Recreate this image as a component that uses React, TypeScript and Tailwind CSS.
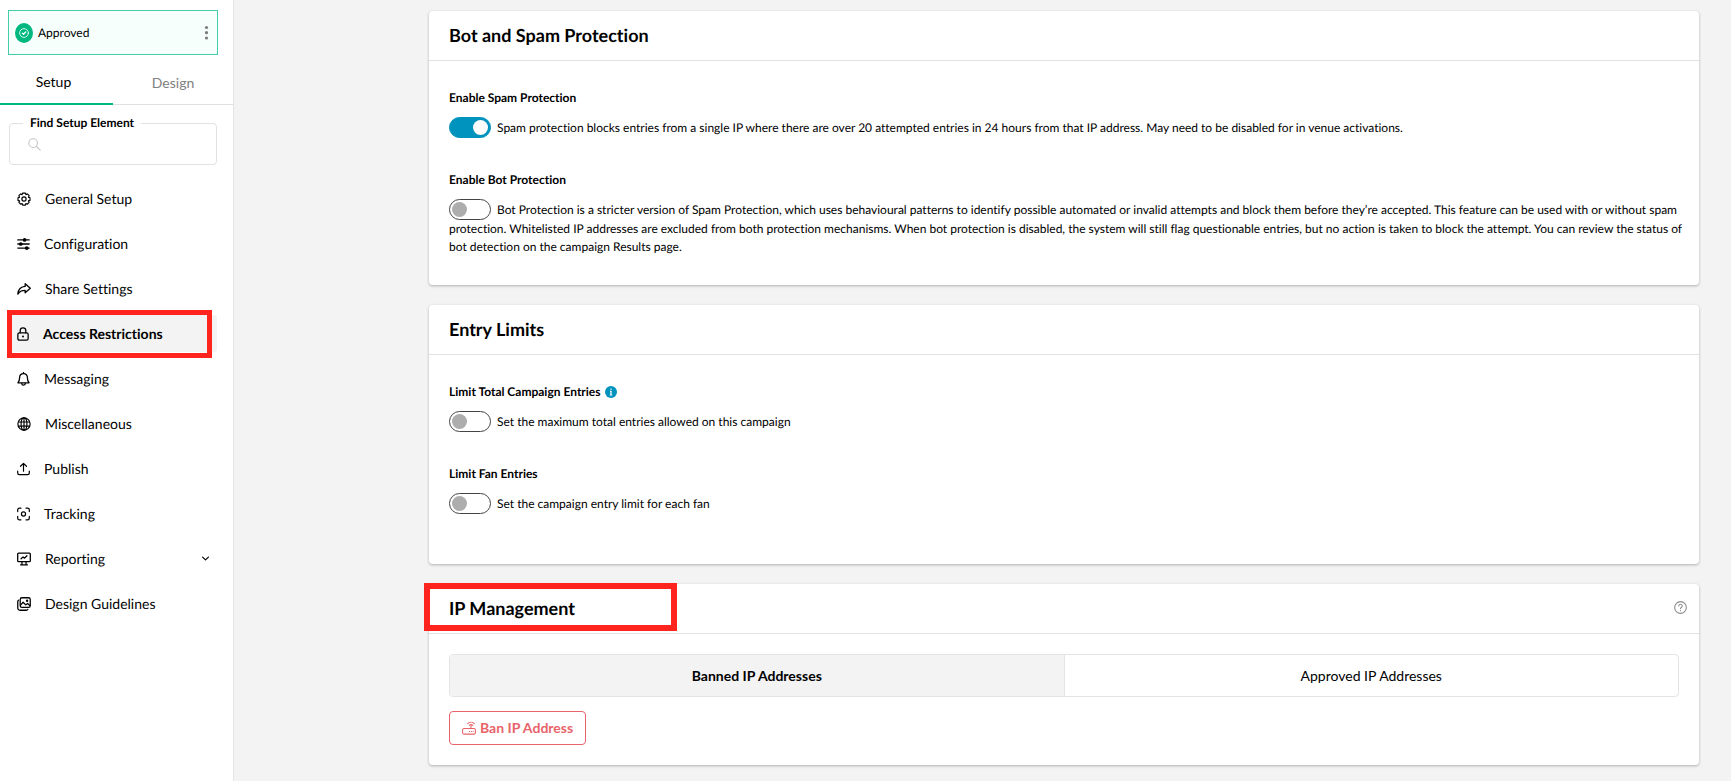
import React, { useState } from "react";

type IconProps = { className?: string };

const stroke = {
  fill: "none",
  stroke: "currentColor",
  strokeWidth: 2,
  strokeLinecap: "round" as const,
  strokeLinejoin: "round" as const,
};

const GearIcon = ({ className }: IconProps) => (
  <svg className={className} viewBox="0 0 24 24" {...stroke}>
    <circle cx="12" cy="12" r="3.6" />
    <path d="M9.6 1.8h4.8l.9 2.7 2.5-1.2 3 3-1.2 2.6 2.7.9v4.6l-2.7.9 1.2 2.6-3 3-2.5-1.2-.9 2.7H9.6l-.9-2.7-2.5 1.2-3-3 1.2-2.6-2.7-.9V9.8l2.7-.9-1.2-2.6 3-3 2.5 1.2z" />
  </svg>
);

const SlidersIcon = ({ className }: IconProps) => (
  <svg className={className} viewBox="0 0 24 24" {...stroke} strokeWidth={2.4}>
    <path d="M1.5 4.5h21M1.5 12h21M1.5 19.5h21" />
    <g fill="currentColor" stroke="none">
      <circle cx="14" cy="4.5" r="3.4" />
      <circle cx="7" cy="12" r="3.4" />
      <circle cx="18" cy="19.5" r="3.4" />
    </g>
  </svg>
);

const ShareIcon = ({ className }: IconProps) => (
  <svg className={className} viewBox="0 0 24 24" {...stroke} strokeWidth={2.2}>
    <path d="M14 3l8.8 7.7-8.8 7.8v-4.3c-6 0-9.7 1.6-12.6 6.5C2.2 12.8 6.5 7.8 14 7.5z" />
  </svg>
);

const LockIcon = ({ className }: IconProps) => (
  <svg className={className} viewBox="0 0 20 24" {...stroke} strokeWidth={2.2}>
    <rect x="1.2" y="10" width="17.6" height="12.5" rx="2.5" />
    <path d="M5.2 10V6.2a4.8 4.8 0 0 1 9.6 0V10" />
    <circle cx="10" cy="16.2" r="1.7" fill="currentColor" stroke="none" />
  </svg>
);

const BellIcon = ({ className }: IconProps) => (
  <svg className={className} viewBox="0 0 22 24" {...stroke} strokeWidth={2.2}>
    <path d="M1.5 18.5h19c-1.8-1.7-2.8-3.7-2.8-8.5 0-4.5-2.7-7.3-6.7-7.3S4.3 5.5 4.3 10c0 4.8-1 6.8-2.8 8.5z" />
    <path d="M8 19.5a3 3 0 0 0 6 0M11 1v1" />
  </svg>
);

const GlobeIcon = ({ className }: IconProps) => (
  <svg className={className} viewBox="0 0 24 24" {...stroke}>
    <circle cx="12" cy="12" r="10.5" />
    <ellipse cx="12" cy="12" rx="5" ry="10.5" />
    <path d="M12 1.5v21M2.5 8.5h19M2.5 15.5h19" />
  </svg>
);

const UploadIcon = ({ className }: IconProps) => (
  <svg className={className} viewBox="0 0 24 24" {...stroke} strokeWidth={2.2}>
    <path d="M12 16V2M6.5 7L12 1.5 17.5 7M1.3 16v3.5a3 3 0 0 0 3 3h15.4a3 3 0 0 0 3-3V16" />
  </svg>
);

const FocusIcon = ({ className }: IconProps) => (
  <svg className={className} viewBox="0 0 24 24" {...stroke} strokeWidth={2.2}>
    <circle cx="12" cy="12" r="3.8" />
    <path d="M1.3 7.5V4.3a3 3 0 0 1 3-3h3M16.7 1.3h3a3 3 0 0 1 3 3v3.2M22.7 16.5v3.2a3 3 0 0 1-3 3h-3M7.3 22.7h-3a3 3 0 0 1-3-3v-3.2" />
  </svg>
);

const ReportIcon = ({ className }: IconProps) => (
  <svg className={className} viewBox="0 0 24 24" {...stroke} strokeWidth={2.2}>
    <rect x="1.2" y="2" width="21.6" height="14.5" rx="1.5" />
    <path d="M7 11.5l3.3-3 2.7 2 4-4M8.5 17v4.5M15.5 17v4.5M6 22h12" />
  </svg>
);

const ImagesIcon = ({ className }: IconProps) => (
  <svg className={className} viewBox="0 0 24 24" {...stroke} strokeWidth={2.2}>
    <rect x="5.5" y="1.3" width="17.2" height="16.5" rx="3" />
    <path d="M2.5 5.5c-.8.6-1.2 1.5-1.2 2.5v11a3.7 3.7 0 0 0 3.7 3.7h11c1 0 2-.5 2.6-1.3M6 14l4.5-5 4.5 4.5 3-2.5 4 3.5" />
    <circle cx="17.3" cy="6.5" r="1" />
  </svg>
);

const RouterIcon = ({ className }: IconProps) => (
  <svg className={className} viewBox="0 0 24 24" {...stroke} strokeWidth={1.8}>
    <rect x="1" y="13" width="22" height="9.5" rx="2.5" />
    <path d="M15.5 13V7M12.5 7.5a4.3 4.3 0 0 1 6 0M9.8 4.5a8.2 8.2 0 0 1 11.4 0M12.5 18h.5M16 18h.5M19.3 18h.2" />
  </svg>
);

const menuItems = [
  { label: "General Setup", href: "#general", icon: GearIcon, size: "w-3.5" },
  { label: "Configuration", href: "#configuration", icon: SlidersIcon, size: "w-[13px]" },
  { label: "Share Settings", href: "#share", icon: ShareIcon, size: "w-3.5" },
  { label: "Access Restrictions", href: "#access", icon: LockIcon, size: "w-3" },
  { label: "Messaging", href: "#messaging", icon: BellIcon, size: "w-[13px]" },
  { label: "Miscellaneous", href: "#misc", icon: GlobeIcon, size: "w-3.5" },
  { label: "Publish", href: "#publish", icon: UploadIcon, size: "w-[13px]" },
  { label: "Tracking", href: "#tracking", icon: FocusIcon, size: "w-[13px]" },
  { label: "Reporting", href: "#reporting", icon: ReportIcon, size: "w-3.5", expandable: true },
  { label: "Design Guidelines", href: "#guidelines", icon: ImagesIcon, size: "w-3.5" },
];

function Sidebar() {
  const active = "Access Restrictions";

  return (
    <aside className="w-[234px] shrink-0 bg-white border-r border-[#e4e4e4]">
      <div className="mt-2.5 ml-2 mr-[15px] h-[45px] flex items-center border border-[#45cda9] bg-[#f6fffc] pl-1.5 pr-[7px]">
        <span className="w-[18px] h-5 rounded-[50%] bg-[#00b87f] flex items-center justify-center">
          <svg className="w-2.5 h-2.5 text-white" viewBox="0 0 24 24" {...stroke}>
            <circle cx="12" cy="12" r="10.5" />
            <path d="M8 12.5l3 2.5 5-5.5" strokeWidth="3" />
          </svg>
        </span>
        <span className="ml-[5px] text-xs">Approved</span>
        <button type="button" aria-label="Status options" className="ml-auto w-[7px] text-[#7c7c7c]">
          <svg className="w-[7px] h-4" viewBox="0 0 7 16" fill="currentColor">
            <circle cx="3.5" cy="2.5" r="1.6" />
            <circle cx="3.5" cy="7.7" r="1.6" />
            <circle cx="3.5" cy="13" r="1.6" />
          </svg>
        </button>
      </div>

      <div className="mt-2.5 h-10 flex border-b border-[#e0e0e0] text-sm">
        <button type="button" className="w-[113px] h-10 pr-1.5 pb-1 border-b-2 border-[#00b87f]">
          Setup
        </button>
        <button type="button" className="flex-1 pb-1 text-[#808080]">
          Design
        </button>
      </div>

      <fieldset className="mt-[9px] ml-[9px] mr-4 h-[51px] border border-[#e2e2e2] rounded-[4px]">
        <legend className="ml-[13px] px-[7px] text-xs leading-[18px] font-bold">
          <label htmlFor="find">Find Setup Element</label>
        </legend>
        <div className="flex items-center pt-0.5 pl-[18px] pr-2">
          <svg className="w-[13px] h-[13px] text-[#c4c4c4]" viewBox="0 0 24 24" {...stroke}>
            <circle cx="9.5" cy="9.5" r="8" />
            <path d="M15.5 15.5l7 7" />
          </svg>
          <input id="find" type="text" className="ml-2 min-w-0 flex-1 h-5 text-xs outline-none" />
        </div>
      </fieldset>

      <nav className="mt-[15px] ml-[9px] mr-4 flex flex-col gap-2 text-sm">
        {menuItems.map((item) => {
          const Icon = item.icon;
          return (
            <a
              key={item.label}
              href={item.href}
              className={
                item.label === active
                  ? "relative h-[37px] flex items-center px-2 rounded-[3px] bg-[#f3f3f3] font-bold"
                  : "h-[37px] flex items-center px-2 rounded-[3px]"
              }
            >
              <Icon className={`${item.size} h-3.5 shrink-0`} />
              <span className="ml-3.5">{item.label}</span>
              {item.expandable && (
                <svg className="ml-auto w-[7px] h-[7px]" viewBox="0 0 12 12" {...stroke}>
                  <path d="M1 3.5l5 5 5-5" />
                </svg>
              )}
              {item.label === active && (
                <span className="absolute -left-0.5 right-[5px] -top-[5px] -bottom-1.5 border-[5px] border-[#ff241e]" />
              )}
            </a>
          );
        })}
      </nav>
    </aside>
  );
}

function Card({ title, help, highlight, children }: {
  title: string;
  help?: boolean;
  highlight?: boolean;
  children: React.ReactNode;
}) {
  return (
    <section className="bg-white rounded-[4px] shadow-[0_1px_3px_rgba(0,0,0,0.28)]">
      <div className="relative h-[50px] flex items-center justify-between pl-5 pr-3 pb-0.5 border-b border-[#e2e2e2]">
        <h2 className="text-lg font-bold">{title}</h2>
        {help && (
          <button type="button" aria-label="Help" className="text-[#8c8c8c]">
            <svg className="w-[13px] h-[13px]" viewBox="0 0 24 24" {...stroke}>
              <circle cx="12" cy="12" r="10.8" />
              <path d="M8.8 9a3.2 3.2 0 1 1 4.7 2.9c-1 .6-1.5 1.1-1.5 2.3M12 17.8v.2" />
            </svg>
          </button>
        )}
        {highlight && (
          <span className="absolute -left-[5px] -top-px w-[253px] h-12 border-[6px] border-[#ff241e]" />
        )}
      </div>
      {children}
    </section>
  );
}

function ToggleField({ id, label, text, info, defaultOn = false }: {
  id: string;
  label: string;
  text: string;
  info?: boolean;
  defaultOn?: boolean;
}) {
  const [on, setOn] = useState(defaultOn);

  return (
    <div className="text-xs leading-[18px]">
      <div className="flex items-center">
        <label htmlFor={id} className="font-bold">{label}</label>
        {info && (
          <svg className="ml-1 w-3 h-3" viewBox="0 0 12 12">
            <circle cx="6" cy="6" r="6" fill="#0093bd" />
            <path d="M6 2.5v1.3M5 5.3h1v3.5M4.8 9h2.4" stroke="#fff" strokeWidth="1.2" fill="none" />
          </svg>
        )}
      </div>
      <p className="mt-2.5">
        <input
          id={id}
          type="checkbox"
          role="switch"
          checked={on}
          onChange={(e) => setOn(e.target.checked)}
          className="appearance-none inline-flex items-center w-[42px] h-[21px] mr-1.5 px-0.5 align-[-3px] rounded-full border border-[#444] bg-white before:block before:w-[15px] before:h-[15px] before:rounded-full before:bg-[#adadad] checked:bg-[#0093bd] checked:border-[#0093bd] checked:justify-end checked:before:bg-white"
        />
        {text}
      </p>
    </div>
  );
}

export default function App() {
  const [tab, setTab] = useState("banned");

  return (
    <div className="min-h-screen flex bg-[#f3f3f3] text-black font-['Lato',sans-serif] [text-rendering:geometricPrecision] [font-variant-ligatures:none]">
      <Sidebar />
      <main className="flex-1 min-w-0 pt-[11px] pb-3.5 pl-[195px] pr-8 flex flex-col gap-5">
        <Card title="Bot and Spam Protection">
          <div className="pl-5 pr-3 pt-7 pb-[29px] flex flex-col gap-[33px]">
            <ToggleField
              id="spam"
              label="Enable Spam Protection"
              text="Spam protection blocks entries from a single IP where there are over 20 attempted entries in 24 hours from that IP address. May need to be disabled for in venue activations."
              defaultOn
            />
            <ToggleField
              id="bot"
              label="Enable Bot Protection"
              text="Bot Protection is a stricter version of Spam Protection, which uses behavioural patterns to identify possible automated or invalid attempts and block them before they’re accepted. This feature can be used with or without spam protection. Whitelisted IP addresses are excluded from both protection mechanisms. When bot protection is disabled, the system will still flag questionable entries, but no action is taken to block the attempt. You can review the status of bot detection on the campaign Results page."
            />
          </div>
        </Card>

        <Card title="Entry Limits">
          <div className="pl-5 pr-3 pt-7 pb-[50px] flex flex-col gap-[33px]">
            <ToggleField
              id="total"
              label="Limit Total Campaign Entries"
              text="Set the maximum total entries allowed on this campaign"
              info
            />
            <ToggleField
              id="fan"
              label="Limit Fan Entries"
              text="Set the campaign entry limit for each fan"
            />
          </div>
        </Card>

        <Card title="IP Management" help highlight>
          <div className="p-5">
            <div className="h-[43px] flex border border-[#e4e4e4] rounded-[4px] overflow-hidden text-sm">
              <button
                type="button"
                onClick={() => setTab("banned")}
                className={tab === "banned" ? "flex-1 bg-[#f3f3f3] font-bold" : "flex-1"}
              >
                Banned IP Addresses
              </button>
              <button
                type="button"
                onClick={() => setTab("approved")}
                className={
                  tab === "approved"
                    ? "flex-1 border-l border-[#e4e4e4] bg-[#f3f3f3] font-bold"
                    : "flex-1 border-l border-[#e4e4e4]"
                }
              >
                Approved IP Addresses
              </button>
            </div>
            <button
              type="button"
              className="mt-3.5 h-[34px] px-3 flex items-center gap-1 border border-[#e8646a] rounded-[4px] text-sm font-bold text-[#e8646a]"
            >
              <RouterIcon className="w-3.5 h-3.5" />
              Ban IP Address
            </button>
          </div>
        </Card>
      </main>
    </div>
  );
}
